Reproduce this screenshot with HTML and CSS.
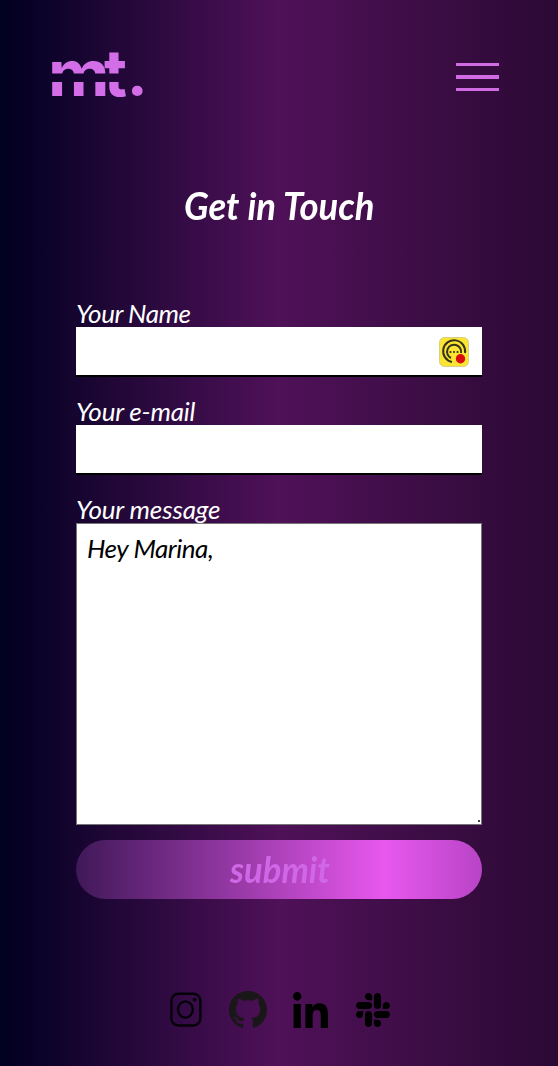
FILE: index.html
```html
<!DOCTYPE html>
<html lang="en">
<head>
<meta charset="utf-8">
<title>Get in Touch</title>
<link rel="stylesheet" href="styles.css">
</head>
<body>
<header class="header">
  <svg class="logo" width="96" height="50" viewBox="0 0 96 50" role="img" aria-label="mt.">
    <mask id="slice"><rect width="96" height="50" fill="#fff"/><rect y="23.500" width="80" height="8.500" fill="#000"/></mask>
    <text class="logo-letter" y="46" mask="url(#slice)"><tspan x="-2" textLength="61.500" lengthAdjust="spacingAndGlyphs">m</tspan><tspan class="logo-t" x="54" textLength="23" lengthAdjust="spacingAndGlyphs">t</tspan><tspan class="logo-dot" x="79.500">.</tspan></text>
  </svg>
  <button class="menu" aria-label="Menu"><span class="bar"></span><span class="bar"></span><span class="bar"></span></button>
</header>
<main class="contact">
  <h1 class="title"><span class="title-text">Get in Touch</span></h1>
  <form class="form">
    <label class="label name-label" for="name">Your Name</label>
    <div class="field">
      <input class="input" id="name" type="text">
      <svg class="badge" viewBox="0 0 30 30" aria-hidden="true">
        <rect x=".5" y=".5" width="29" height="29" rx="5" fill="#fbe532" stroke="#d8cf87"/>
        <g fill="none" stroke="#35331b" stroke-width="2">
          <path d="M13 25A11 11 0 1 1 26 16"/>
          <path d="M12 21A7 7 0 1 1 22 16"/>
        </g>
        <g fill="#35331b"><circle cx="11.5" cy="15" r="1.1"/><circle cx="15" cy="15" r="1.1"/><circle cx="18.5" cy="15" r="1.1"/></g>
        <circle cx="21.5" cy="21.8" r="4.7" fill="#d80c0c"/>
      </svg>
    </div>
    <label class="label email-label" for="email">Your e-mail</label>
    <div class="field"><input class="input" id="email" type="email"></div>
    <label class="label message-label" for="message">Your message</label>
    <div class="message-field">
      <textarea class="message" id="message">Hey Marina,</textarea>
      <span class="grip"></span>
    </div>
    <button class="submit" type="button"><span class="submit-text">submit</span></button>
  </form>
</main>
<footer class="social">
  <svg width="32" height="35" viewBox="0 0 32 35" fill="none" stroke="#050108" stroke-width="2.4"><rect x="1.4" y="1.7" width="29" height="31.8" rx="7"/><ellipse cx="15.4" cy="17.5" rx="7.4" ry="8.1"/><circle cx="24.7" cy="7.7" r="1.9" fill="#050108" stroke="none"/></svg>
  <svg class="github" width="38" height="37" viewBox="0 0 16 15.65" preserveAspectRatio="none" fill="#191717"><path d="M8 0C3.58 0 0 3.58 0 8c0 3.54 2.29 6.53 5.47 7.59.4.07.55-.17.55-.38 0-.19-.01-.82-.01-1.49-2.01.37-2.53-.49-2.69-.94-.09-.23-.48-.94-.82-1.13-.28-.15-.68-.52-.01-.53.63-.01 1.08.58 1.23.82.72 1.21 1.87.87 2.33.66.07-.52.28-.87.51-1.07-1.78-.2-3.64-.89-3.64-3.95 0-.87.31-1.59.82-2.15-.08-.2-.36-1.02.08-2.12 0 0 .67-.21 2.2.82.64-.18 1.32-.27 2-.27s1.36.09 2 .27c1.53-1.04 2.2-.82 2.2-.82.44 1.1.16 1.92.08 2.12.51.56.82 1.27.82 2.15 0 3.07-1.87 3.75-3.65 3.95.29.25.54.73.54 1.48 0 1.07-.01 1.93-.01 2.2 0 .21.15.46.55.38A8.01 8.01 0 0 0 16 8c0-4.42-3.58-8-8-8z"/></svg>
  <svg class="linkedin" width="35" height="36" viewBox="0 32 448 448" preserveAspectRatio="none" fill="#000"><path d="M100.28 480H7.4V180.900h92.880zM53.790 140.100C24.090 140.100 0 115.500 0 85.800a53.790 53.790 0 0 1 107.580 0c0 29.700-24.100 54.300-53.790 54.300zM447.900 480h-92.680V334.400c0-34.700-.7-79.200-48.290-79.200-48.290 0-55.690 37.700-55.690 76.700V480h-92.780V180.900h89.080v40.800h1.300c12.400-23.500 42.690-48.300 87.880-48.300 94 0 111.280 61.900 111.280 142.300V480z"/></svg>
  <svg class="slack" width="34" height="34" viewBox="0 32 448 448" fill="#000"><path d="M94.120 315.100c0 25.900-21.160 47.060-47.060 47.060S0 341 0 315.100c0-25.900 21.160-47.060 47.060-47.060h47.060v47.060zm23.720 0c0-25.900 21.160-47.060 47.060-47.060s47.060 21.160 47.060 47.060v117.840c0 25.900-21.160 47.060-47.060 47.060s-47.060-21.160-47.060-47.060V315.100zm47.060-188.980c-25.900 0-47.060-21.160-47.060-47.060S139 32 164.900 32s47.060 21.160 47.060 47.060v47.060H164.900zm0 23.720c25.900 0 47.060 21.160 47.060 47.060s-21.160 47.060-47.060 47.060H47.060C21.160 243.960 0 222.800 0 196.900s21.160-47.060 47.060-47.060H164.900zm188.980 47.060c0-25.900 21.160-47.060 47.060-47.060 25.900 0 47.060 21.160 47.060 47.060s-21.160 47.060-47.060 47.060h-47.060V196.900zm-23.720 0c0 25.900-21.160 47.060-47.060 47.060-25.900 0-47.060-21.160-47.060-47.060V79.060c0-25.900 21.160-47.060 47.060-47.060 25.900 0 47.060 21.160 47.060 47.060V196.900zM283.100 385.880c25.900 0 47.060 21.160 47.060 47.060 0 25.900-21.160 47.060-47.060 47.060-25.900 0-47.060-21.160-47.060-47.060v-47.060h47.060zm0-23.720c-25.900 0-47.060-21.160-47.060-47.060 0-25.900 21.160-47.060 47.060-47.060h117.840c25.900 0 47.060 21.160 47.060 47.060 0 25.900-21.160 47.060-47.060 47.060H283.100z"/></svg>
</footer>
</body>
</html>
```
FILE: styles.css
```css
* { box-sizing: border-box; }
body {
  margin: 0;
  min-height: 1066px;
  background: linear-gradient(90deg, #000020 0%, #4f1158 50%, #2b0934 100%);
  font-family: Lato, sans-serif;
  font-style: italic;
  color: #fff;
}
.header {
  display: flex;
  justify-content: space-between;
  align-items: flex-start;
  height: 180px;
  padding: 50px 59px 0 50px;
}
.logo { overflow: visible; fill: #d36de8; font-style: normal; }
.logo-letter { font: 700 63px Inter, sans-serif; }
.logo-t { font-size: 65px; }
.logo-dot { font: 900 65px Lato, sans-serif; }
.menu {
  display: flex;
  flex-direction: column;
  gap: 9px;
  width: 43px;
  margin-top: 13px;
  padding: 0;
  border: 0;
  background: none;
}
.bar { width: 43px; height: 3px; background: #d06be4; }
.bar:nth-child(2) { height: 4px; }
.contact { width: 406px; margin: 0 auto; }
.title {
  height: 120px;
  margin: 0;
  font-size: 38px;
  line-height: 51px;
  text-align: center;
  white-space: nowrap;
}
.title-text, .submit-text { display: inline-block; transform: scaleX(.96); }
.form { display: flex; flex-direction: column; }
.label { height: 27px; font-size: 26px; line-height: 26px; white-space: nowrap; }
.name-label { letter-spacing: -.45px; }
.email-label { letter-spacing: -.2px; }
.message-label { letter-spacing: -.15px; }
.field { position: relative; height: 50px; margin-bottom: 21px; }
.input {
  display: block;
  width: 100%;
  height: 50px;
  padding: 0 10px;
  border: 0;
  border-bottom: 2px solid #000;
  border-radius: 0;
  background: #fff;
}
.badge { position: absolute; top: 10px; right: 13px; width: 30px; height: 30px; }
.message-field { position: relative; margin-bottom: 15px; }
.message {
  display: block;
  width: 100%;
  height: 302px;
  margin: 0;
  padding: 8px 10px;
  border: 1px solid #767676;
  border-radius: 0;
  background: #fff;
  color: #000;
  font: italic 26px/33px Lato, sans-serif;
  letter-spacing: -.45px;
  resize: none;
}
.grip { position: absolute; right: 2px; bottom: 3px; width: 2px; height: 2px; background: #444; }
.submit {
  height: 59px;
  padding: 0 0 0 2px;
  border: 0;
  border-radius: 30px;
  background: linear-gradient(90deg, #401858 0%, #e858ee 76%, #b844c6 100%);
  color: #d067e6;
  font: italic 700 36px/57px Lato, sans-serif;
}
.social { display: flex; align-items: flex-start; margin: 93px 0 0 170px; }
.github { margin: -1px 0 0 27px; }
.linkedin { margin-left: 26px; }
.slack { margin: 1px 0 0 28px; }
```
